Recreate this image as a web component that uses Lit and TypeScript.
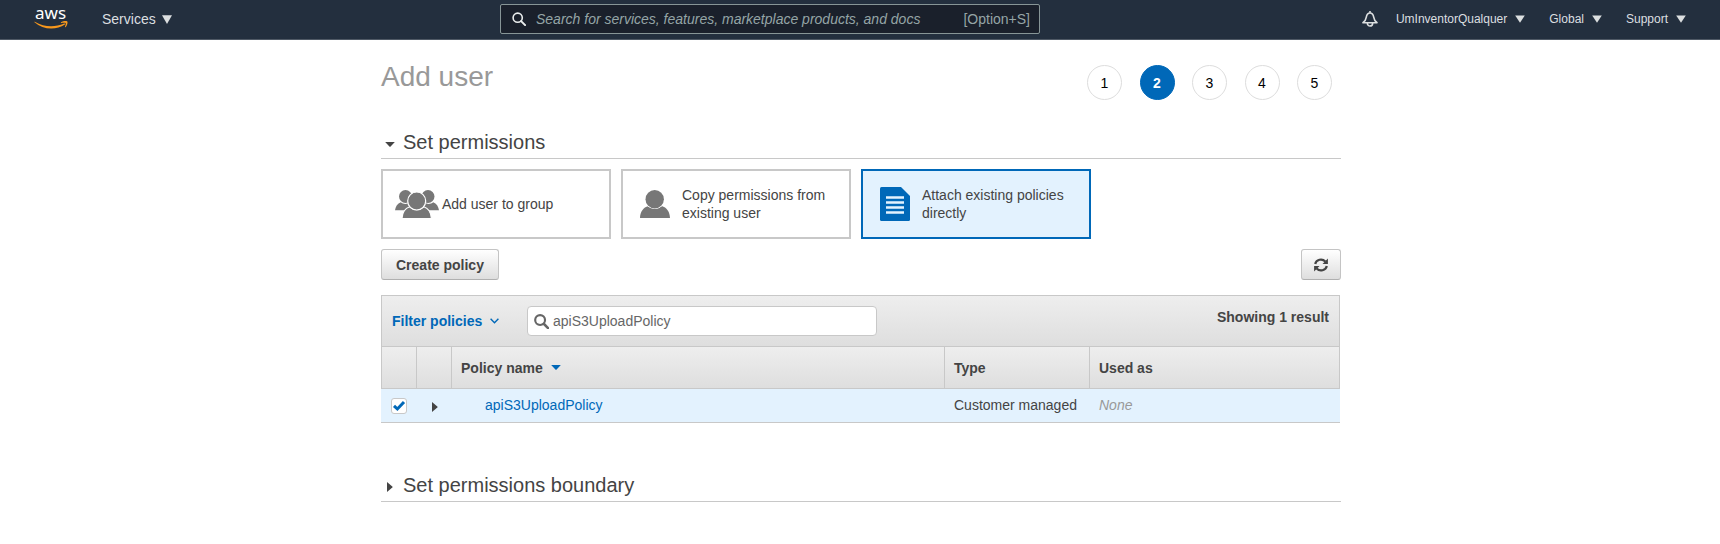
import { LitElement, html, css, svg } from "lit";
import { customElement, property, state } from "lit/decorators.js";
import { classMap } from "lit/directives/class-map.js";

const FONT = css`"Liberation Sans", Arial, Helvetica, sans-serif`;

const downArrow = html`<svg width="10" height="8" viewBox="0 0 10 8" aria-hidden="true">
  <path d="M.2.4h9.600L5 7.800z" fill="currentColor" />
</svg>`;

const caretDown = html`<svg width="10" height="5" viewBox="0 0 10 5" aria-hidden="true">
  <path d="M.2 0h9.6L5.6 4.4q-.6.6-1.2 0z" fill="currentColor" />
</svg>`;

const caretRight = html`<svg width="6" height="10" viewBox="0 0 6 10" aria-hidden="true">
  <path d="M0 0l5.3 4.4q.6.6 0 1.2L0 10z" fill="currentColor" />
</svg>`;

const groupIcon = html`<svg width="44" height="28" viewBox="0 0 44 28" aria-hidden="true">
  <g fill="#777">
    <circle cx="10.500" cy="6.500" r="6.500" />
    <circle cx="33" cy="6.500" r="6.500" />
    <path d="M0 20.300C.5 16.500 2.500 13.400 5.800 12.200c2.500 2.300 6.500 2.300 9.200 0L20 20.300z" />
    <path d="M44 20.300c-.5-3.800-2.500-6.900-5.800-8.100-2.500 2.300-6.500 2.300-9.200 0L24 20.300z" />
  </g>
  <g fill="#777" stroke="#fff" stroke-width="1.200">
    <path d="M7 29c.2-6 3-10.600 7.600-12.200 4 3.800 10.200 3.800 14.200 0C33.400 18.400 36.200 23 36.400 29z" />
    <circle cx="21.700" cy="11" r="9" />
  </g>
</svg>`;

const userIcon = html`<svg width="30" height="28" viewBox="0 0 30 28" aria-hidden="true">
  <g fill="#777">
    <path d="M0 28c.1-6.200 3.400-10.700 8.300-12 4.100 3.900 9.300 3.900 13.400 0C26.600 17.300 29.900 21.800 30 28z" />
    <circle cx="14.700" cy="9.200" r="9.900" fill="#fff" />
    <circle cx="14.700" cy="9.200" r="9.200" />
  </g>
</svg>`;

const policyIcon = html`<svg width="30" height="34" viewBox="0 0 30 34" aria-hidden="true">
  <path d="M1.500 0H21l9 9v23.500q0 1.500-1.500 1.500h-27Q0 34 0 32.500v-31Q0 0 1.500 0z" fill="#0068b8" />
  <path d="M6 10.500h18M6 15.500h18M6 20.500h18M6 25.500h18" stroke="#e3f2fe" stroke-width="2.400" />
</svg>`;

const lens = (size: number, width: number) => svg`<svg width=${size} height=${size} viewBox="0 0 14 14" aria-hidden="true">
  <circle cx="5.700" cy="5.700" r="4.600" fill="none" stroke="currentColor" stroke-width=${width} />
  <path d="M9.100 9.100l4 4" stroke="currentColor" stroke-width=${width + 0.4} stroke-linecap="round" />
</svg>`;

@customElement("console-nav")
class ConsoleNav extends LitElement {
  static styles = css`
    :host {
      display: block;
      font: 14px/20px ${FONT};
      color: #dcdfe0;
    }
    .bar {
      box-sizing: border-box;
      display: grid;
      grid-template-columns: 500px minmax(200px, 540px) 1fr;
      align-items: center;
      height: 40px;
      background: #232f3e;
      border-bottom: 1px solid #4f5965;
      padding-bottom: 1px;
    }
    .start {
      display: flex;
      align-items: center;
      gap: 34px;
      padding-left: 34px;
    }
    .logo {
      display: block;
      height: 38px;
    }
    .wordmark {
      font: 400 17px "Noto Sans", "Open Sans", sans-serif;
      fill: #fff;
    }
    button {
      display: inline-flex;
      align-items: center;
      padding: 0;
      border: 0;
      background: none;
      color: inherit;
      font: inherit;
      cursor: pointer;
    }
    .services {
      gap: 6px;
    }
    .search {
      box-sizing: border-box;
      display: flex;
      align-items: center;
      gap: 10px;
      height: 30px;
      padding: 0 9px 0 11px;
      border: 1px solid #879596;
      border-radius: 2px;
      background: #1a202b;
      color: #95a5a6;
    }
    .glass {
      display: flex;
      color: #eaeded;
    }
    input {
      flex: 1;
      min-width: 0;
      padding: 0;
      border: 0;
      outline: 0;
      background: none;
      color: #eaeded;
      font: inherit;
    }
    input::placeholder {
      color: #95a5a6;
      font-style: italic;
      opacity: 1;
    }
    .end {
      display: flex;
      align-items: center;
      justify-content: flex-end;
      gap: 24px;
      padding-right: 34px;
      font-size: 12px;
    }
    .account {
      display: flex;
      align-items: center;
      gap: 18px;
    }
    .menu {
      gap: 8px;
    }
  `;

  render() {
    return html`
      <header class="bar">
        <div class="start">
          <a class="logo" href="#" aria-label="AWS home">
            <svg width="34" height="38" viewBox="0 -8 34 38">
              <text class="wordmark" x="1" y="11">aws</text>
              <path d="M.8 13.700c9.400 5.600 19.800 5.800 29.400 1.900.9-.3 1.400.5.700 1C22 22.500 9 21.900.5 14.300c-.4-.4-.2-.8.3-.6z" fill="#f7981d" />
              <path d="M27 14.200c2-1.400 5.600-1.600 6.300-.8.700.9-.2 4.400-1.900 5.800-.3.300-.6.100-.5-.2.500-1.200 1.200-3.400.8-3.900-.4-.5-2.900-.3-4.300-.2-.5 0-.7-.4-.4-.7z" fill="#f7981d" />
            </svg>
          </a>
          <button class="services">
            Services
            <svg width="10" height="9" viewBox="0 0 10 9" aria-hidden="true"><path d="M0 .3h10L5 9z" fill="currentColor" /></svg>
          </button>
        </div>
        <label class="search">
          <span class="glass">${lens(14, 1.6)}</span>
          <input aria-label="Search the console" placeholder="Search for services, features, marketplace products, and docs" />
          <span>[Option+S]</span>
        </label>
        <nav class="end">
          <div class="account">
            <button aria-label="Notifications">
              <svg width="16" height="16" viewBox="0 0 16 16" fill="none" stroke="currentColor" stroke-width="1.600" stroke-linejoin="round" aria-hidden="true">
                <path d="M8 0v2M1 11.700h14C12.800 10 12 8.600 11.700 6.200 11.300 3.600 10 2 8 2S4.700 3.600 4.300 6.200C4 8.600 3.200 10 1 11.700zM5.400 12.400a2.600 2.600 0 0 0 5.200 0" />
              </svg>
            </button>
            <button class="menu">UmInventorQualquer ${downArrow}</button>
          </div>
          <button class="menu">Global ${downArrow}</button>
          <button class="menu">Support ${downArrow}</button>
        </nav>
      </header>
    `;
  }
}

@customElement("wizard-steps")
class WizardSteps extends LitElement {
  @property({ type: Number }) current = 1;
  @property({ type: Number }) count = 5;

  static styles = css`
    .steps {
      display: flex;
      justify-content: space-between;
      width: 245px;
      margin: 0;
      padding: 0;
      list-style: none;
      font: 14px/20px ${FONT};
      color: #000;
    }
    .step {
      box-sizing: border-box;
      display: grid;
      place-items: center;
      width: 35px;
      height: 35px;
      border: 1px solid #ddd;
      border-radius: 50%;
    }
    .active {
      background: #0068b8;
      border-color: #0068b8;
      color: #fff;
      font-weight: bold;
    }
  `;

  render() {
    return html`<ol class="steps">
      ${Array.from({ length: this.count }, (_, i) => html`<li class=${classMap({ step: true, active: i + 1 === this.current })}>${i + 1}</li>`)}
    </ol>`;
  }
}

@customElement("policy-table")
class PolicyTable extends LitElement {
  @state() private query = "apiS3UploadPolicy";
  @state() private policies = [{ name: "apiS3UploadPolicy", type: "Customer managed", usedAs: "None", selected: true }];

  static styles = css`
    :host {
      display: block;
      font: 14px/18px ${FONT};
      color: #444;
    }
    .panel {
      margin-right: 1px;
    }
    .filter {
      box-sizing: border-box;
      display: flex;
      align-items: flex-start;
      height: 51px;
      padding: 10px;
      border: 1px solid #c8c8c8;
      border-bottom: 0;
      background: linear-gradient(#eee, #dedede);
    }
    button {
      display: inline-flex;
      align-items: center;
      padding: 0;
      border: 0;
      background: none;
      color: inherit;
      font: inherit;
      cursor: pointer;
    }
    .pick {
      gap: 8px;
      width: 135px;
      height: 30px;
      color: #0068b8;
      font-weight: bold;
    }
    .box {
      box-sizing: border-box;
      display: flex;
      align-items: center;
      gap: 4px;
      width: 350px;
      height: 30px;
      padding: 0 6px;
      border: 1px solid #c8c8c8;
      border-radius: 4px;
      background: #fff;
      color: #666;
    }
    .box input {
      flex: 1;
      min-width: 0;
      padding: 0;
      border: 0;
      outline: 0;
      background: none;
      color: inherit;
      font: inherit;
    }
    .count {
      margin-left: auto;
      padding-top: 2px;
      font-weight: bold;
    }
    table {
      width: 100%;
      table-layout: fixed;
      border-collapse: separate;
      border-spacing: 0;
    }
    .narrow {
      width: 35px;
    }
    .type {
      width: 145px;
    }
    .used {
      width: 251px;
    }
    th {
      box-sizing: border-box;
      height: 43px;
      padding: 0 9px;
      border: 1px solid #c8c8c8;
      border-right: 0;
      background: linear-gradient(#eee, #dedede);
      text-align: left;
    }
    th:last-child {
      border-right: 1px solid #c8c8c8;
    }
    .sort {
      gap: 8px;
    }
    .sort svg {
      color: #0068b8;
    }
    td {
      box-sizing: border-box;
      height: 34px;
      padding: 0 0 2px 10px;
      border-bottom: 1px solid #c8c8c8;
      background: #e3f2fe;
      white-space: nowrap;
    }
    .name {
      padding-left: 34px;
    }
    .name a {
      color: #0068b8;
      text-decoration: none;
    }
    .expander {
      padding: 2px 0 0 16px;
    }
    .none {
      color: #999;
      font-style: italic;
    }
    .tick {
      display: inline-grid;
      vertical-align: middle;
    }
    .tick input,
    .tick svg {
      grid-area: 1 / 1;
    }
    .tick input {
      appearance: none;
      box-sizing: border-box;
      width: 16px;
      height: 16px;
      margin: 0;
      border: 1px solid #c8c8c8;
      border-radius: 3px;
      background: #fff;
    }
    .tick svg {
      visibility: hidden;
      pointer-events: none;
    }
    .tick input:checked + svg {
      visibility: visible;
    }
  `;

  render() {
    return html`
      <div class="panel">
        <div class="filter">
          <button class="pick">
            Filter policies
            <svg width="9" height="6" viewBox="0 0 9 6" fill="none" stroke="currentColor" stroke-width="1.400" aria-hidden="true"><path d="M.6.8l3.900 4 3.900-4" /></svg>
          </button>
          <label class="box">
            ${lens(15, 2)}
            <input aria-label="Search policies" .value=${this.query} @input=${(e: Event) => (this.query = (e.target as HTMLInputElement).value)} />
          </label>
          <span class="count">Showing ${this.policies.length} result</span>
        </div>
        <table>
          <thead>
            <tr>
              <th class="narrow" aria-label="Select"></th>
              <th class="narrow" aria-label="Expand"></th>
              <th><button class="sort">Policy name ${caretDown}</button></th>
              <th class="type">Type</th>
              <th class="used">Used as</th>
            </tr>
          </thead>
          <tbody>
            ${this.policies.map(
              (p) => html`<tr>
                <td>
                  <label class="tick">
                    <input type="checkbox" aria-label=${`Select ${p.name}`} .checked=${p.selected} />
                    <svg width="16" height="16" viewBox="0 0 16 16" fill="none" stroke="#0068b8" stroke-width="3" aria-hidden="true"><path d="M3 7.800l3.400 3.200L13 4" /></svg>
                  </label>
                </td>
                <td class="expander"><button aria-label=${`Show ${p.name}`}>${caretRight}</button></td>
                <td class="name"><a href="#">${p.name}</a></td>
                <td>${p.type}</td>
                <td class="none">${p.usedAs}</td>
              </tr>`
            )}
          </tbody>
        </table>
      </div>
    `;
  }
}

@customElement("app-root")
class AppRoot extends LitElement {
  @state() private mode = 2;

  static styles = css`
    :host {
      display: block;
      font: 14px/18px ${FONT};
      color: #444;
    }
    .page {
      padding-left: 2px;
    }
    .content {
      max-width: 960px;
      margin: 0 auto;
      padding: 20px 0;
    }
    .title {
      display: flex;
      justify-content: space-between;
      align-items: flex-start;
      height: 70px;
    }
    h1 {
      margin: 0;
      color: #999;
      font-size: 28px;
      font-weight: normal;
      line-height: 34px;
    }
    wizard-steps {
      padding: 5px 9px 0 0;
    }
    h2 {
      margin: 0;
      padding-bottom: 4px;
      border-bottom: 1px solid #c8c8c8;
      font-size: 20px;
      font-weight: normal;
      line-height: 24px;
    }
    button {
      font: inherit;
      color: inherit;
      cursor: pointer;
    }
    .toggle {
      display: flex;
      align-items: center;
      width: 100%;
      padding: 0;
      border: 0;
      background: none;
    }
    .mark {
      display: flex;
      justify-content: center;
      width: 18px;
      padding-top: 4px;
      margin-right: 4px;
    }
    .modes {
      display: grid;
      grid-template-columns: repeat(3, 230px);
      gap: 10px;
      margin: 10px 0;
    }
    .mode {
      display: grid;
      grid-template-columns: 59px 1fr;
      align-items: center;
      height: 70px;
      padding: 0 10px 0 0;
      border: 2px solid #c8c8c8;
      background: #fff;
      text-align: left;
    }
    .chosen {
      border-color: #0068b8;
      background: #e3f2fe;
    }
    .icon {
      display: flex;
      padding-left: 17px;
    }
    .wide {
      padding-left: 12px;
    }
    .tools {
      display: flex;
      justify-content: space-between;
      margin-bottom: 15px;
    }
    .tool {
      box-sizing: border-box;
      display: grid;
      place-items: center;
      height: 31px;
      padding: 0 14px;
      border: 1px solid #c4c4c4;
      border-bottom-color: #b0b0b0;
      border-radius: 3px;
      background: linear-gradient(#fff, #dedede);
      font-weight: bold;
    }
    .square {
      width: 40px;
      padding: 0;
    }
    .boundary {
      margin-top: 50px;
    }
  `;

  private modes = [
    { label: "Add user to group", icon: groupIcon, wide: true },
    { label: "Copy permissions from existing user", icon: userIcon, wide: false },
    { label: "Attach existing policies directly", icon: policyIcon, wide: false },
  ];

  render() {
    return html`
      <console-nav></console-nav>
      <div class="page">
        <main class="content">
          <div class="title">
            <h1>Add user</h1>
            <wizard-steps current="2"></wizard-steps>
          </div>
          <h2>
            <button class="toggle" aria-expanded="true"><span class="mark">${caretDown}</span>Set permissions</button>
          </h2>
          <div class="modes">
            ${this.modes.map(
              (m, i) => html`<button class=${classMap({ mode: true, chosen: i === this.mode })} @click=${() => (this.mode = i)}>
                <span class=${classMap({ icon: true, wide: m.wide })}>${m.icon}</span>
                <span>${m.label}</span>
              </button>`
            )}
          </div>
          <div class="tools">
            <button class="tool">Create policy</button>
            <button class="tool square" aria-label="Refresh">
              <svg width="14" height="14" viewBox="0 0 14 14" aria-hidden="true">
                <g fill="none" stroke="currentColor" stroke-width="2.200">
                  <path d="M1.200 6A5.800 5.400 0 0 1 11.300 3.500" />
                  <path d="M12.800 8A5.800 5.400 0 0 1 2.700 10.500" />
                </g>
                <path d="M13.900.6V6H8.500zM.1 13.400V8h5.400z" fill="currentColor" />
              </svg>
            </button>
          </div>
          <policy-table></policy-table>
          <h2 class="boundary">
            <button class="toggle" aria-expanded="false"><span class="mark">${caretRight}</span>Set permissions boundary</button>
          </h2>
        </main>
      </div>
    `;
  }
}
